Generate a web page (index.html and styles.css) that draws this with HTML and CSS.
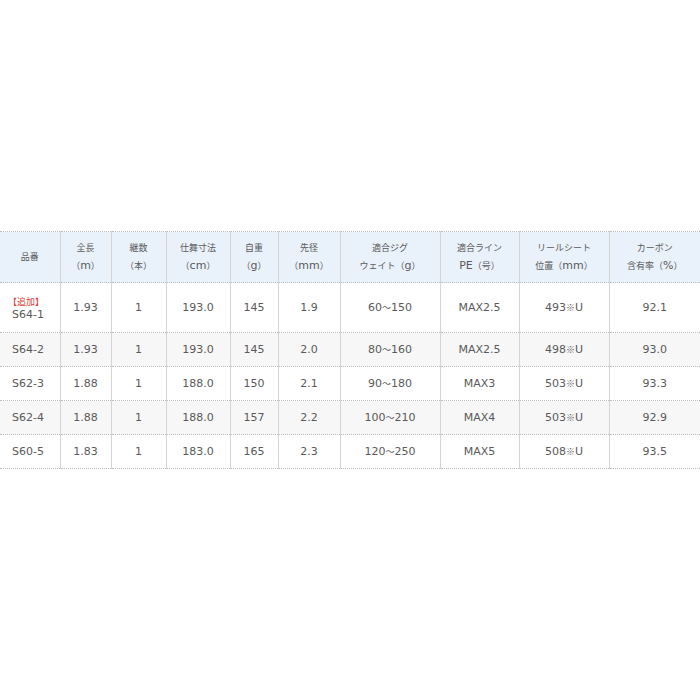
FILE: index.html
```html
<!DOCTYPE html>
<html lang="ja">
<head>
<meta charset="utf-8">
<title>スペック表</title>
<link rel="stylesheet" href="styles.css">
</head>
<body>
<div class="page">
<table class="spec">
<colgroup>
<col class="c1"><col class="c2"><col class="c3"><col class="c4"><col class="c5">
<col class="c6"><col class="c7"><col class="c8"><col class="c9"><col class="c10">
</colgroup>
<thead>
<tr>
<th><span class="j">品番</span></th>
<th><span class="j">全長</span><br><span class="j">（</span>m<span class="j">）</span></th>
<th><span class="j">継数</span><br><span class="j">（本）</span></th>
<th><span class="j">仕舞寸法</span><br><span class="j">（</span>cm<span class="j">）</span></th>
<th><span class="j">自重</span><br><span class="j">（</span>g<span class="j">）</span></th>
<th><span class="j">先径</span><br><span class="j">（</span>mm<span class="j">）</span></th>
<th><span class="j">適合ジグ</span><br><span class="j">ウェイト（</span>g<span class="j">）</span></th>
<th><span class="j">適合ライン</span><br>PE<span class="j">（号）</span></th>
<th><span class="j">リールシート</span><br><span class="j">位置（</span>mm<span class="j">）</span></th>
<th><span class="j">カーボン</span><br><span class="j">含有率（</span>%<span class="j">）</span></th>
</tr>
</thead>
<tbody>
<tr class="tall">
<td class="name"><span class="j new">【追加】</span><br>S64-1</td>
<td>1.93</td><td>1</td><td>193.0</td><td>145</td><td>1.9</td>
<td>60<span class="j">～</span>150</td><td>MAX2.5</td><td>493<span class="j">※</span>U</td><td>92.1</td>
</tr>
<tr class="alt">
<td class="name">S64-2</td>
<td>1.93</td><td>1</td><td>193.0</td><td>145</td><td>2.0</td>
<td>80<span class="j">～</span>160</td><td>MAX2.5</td><td>498<span class="j">※</span>U</td><td>93.0</td>
</tr>
<tr>
<td class="name">S62-3</td>
<td>1.88</td><td>1</td><td>188.0</td><td>150</td><td>2.1</td>
<td>90<span class="j">～</span>180</td><td>MAX3</td><td>503<span class="j">※</span>U</td><td>93.3</td>
</tr>
<tr class="alt">
<td class="name">S62-4</td>
<td>1.88</td><td>1</td><td>188.0</td><td>157</td><td>2.2</td>
<td>100<span class="j">～</span>210</td><td>MAX4</td><td>503<span class="j">※</span>U</td><td>92.9</td>
</tr>
<tr>
<td class="name">S60-5</td>
<td>1.83</td><td>1</td><td>183.0</td><td>165</td><td>2.3</td>
<td>120<span class="j">～</span>250</td><td>MAX5</td><td>508<span class="j">※</span>U</td><td>93.5</td>
</tr>
</tbody>
</table>
</div>
</body>
</html>
```

FILE: styles.css
```css
html, body {
  margin: 0;
  padding: 0;
  background: #ffffff;
}

.page {
  width: 700px;
  height: 700px;
  display: flex;
  flex-direction: column;
  justify-content: center;
}

.spec {
  width: 700px;
  border-collapse: collapse;
  table-layout: fixed;
  font-family: "DejaVu Sans", "Noto Sans CJK JP", sans-serif;
  font-size: 11px;
  color: #5a5a5a;
}

.c1 { width: 60px; }
.c2 { width: 51px; }
.c3 { width: 55px; }
.c4 { width: 64px; }
.c5 { width: 48px; }
.c6 { width: 62px; }
.c7 { width: 100px; }
.c8 { width: 79px; }
.c9 { width: 90px; }
.c10 { width: 91px; }

.j {
  font-family: "Noto Sans CJK JP", sans-serif;
  font-size: 9px;
}

.spec th,
.spec td {
  padding: 0;
  text-align: center;
  vertical-align: middle;
  border-top: 1px dotted #bdbdbd;
  border-bottom: 1px dotted #bdbdbd;
  border-left: 1px solid #d4d4d4;
  font-weight: normal;
}

.spec th:first-child,
.spec td:first-child {
  border-left: none;
}

.spec thead tr {
  height: 51px;
  background: #e9f1fb;
}

.spec th {
  line-height: 18px;
}

.spec tbody tr {
  height: 34px;
}

.spec tbody tr.tall {
  height: 50px;
}

.spec td {
  line-height: 13px;
}

.spec tr.alt {
  background: #f7f7f7;
}

.spec td.name {
  text-align: left;
  padding-left: 12px;
}

.new {
  color: #d9413b;
  margin-left: -4px;
}
```
